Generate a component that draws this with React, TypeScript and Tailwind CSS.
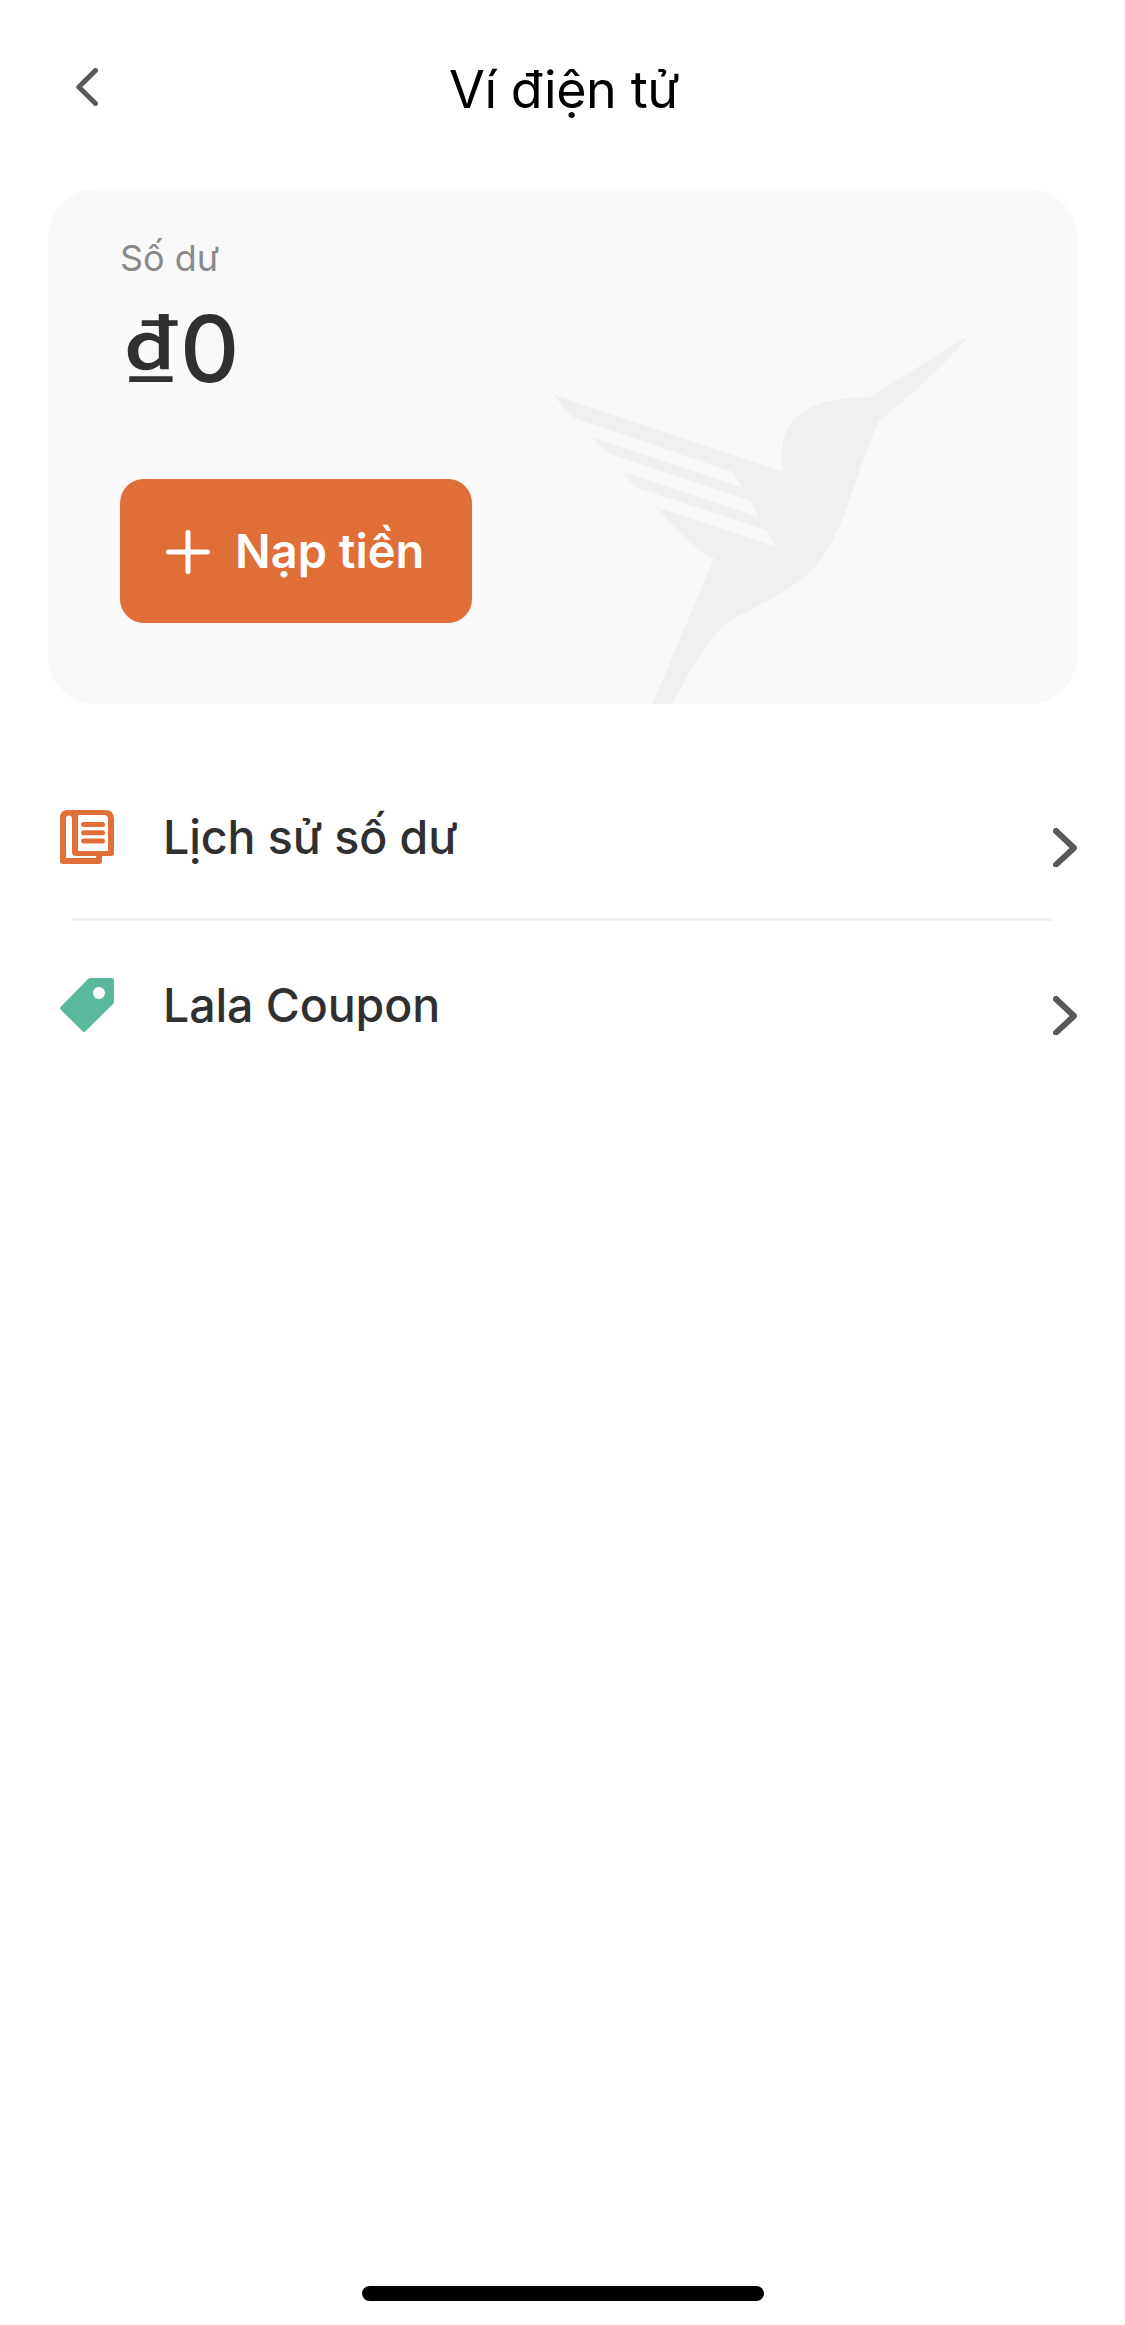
import type { ReactNode } from 'react'

function BackIcon() {
  return (
    <svg className="block h-[38px] w-[22px]" viewBox="0 0 22 38" fill="none">
      <path d="M19.5 2.5L2.8 19L19.5 35.5" stroke="#595959" strokeWidth="5" strokeLinecap="round" strokeLinejoin="round" />
    </svg>
  )
}

function ChevronIcon() {
  return (
    <svg className="block h-[39px] w-6" viewBox="0 0 24 39" fill="none">
      <path d="M3 3L21 20L3 36.6" stroke="#595959" strokeWidth="6" strokeLinecap="round" strokeLinejoin="round" />
    </svg>
  )
}

function PlusIcon() {
  return (
    <svg className="block h-11 w-11" viewBox="0 0 44 44" fill="none">
      <path d="M22 2.5V41.5M2.5 22H41.5" stroke="#fff" strokeWidth="5" strokeLinecap="round" />
    </svg>
  )
}

function HistoryIcon() {
  return (
    <svg className="block h-[54px] w-[54px]" viewBox="0 0 54 54" fill="#e06f38">
      <path
        fillRule="evenodd"
        d="M8 0H45Q54 0 54 9V43Q54 46 51 46H42V51Q42 54 39 54H3Q0 54 0 51V8Q0 0 8 0ZM6 8.5V48H36V46H16Q12 46 12 42V8.5Q12 5.5 9 5.5Q6 5.5 6 8.5ZM18 5V41H48V9Q48 5 44 5Z"
      />
      <rect x="21" y="12" width="24" height="5" rx="2.5" />
      <rect x="21" y="20.2" width="24" height="5" rx="2.5" />
      <rect x="21" y="28.4" width="24" height="5" rx="2.5" />
    </svg>
  )
}

function CouponIcon() {
  return (
    <svg className="block h-[54px] w-[54px]" viewBox="0 0 54 54" fill="#5ab99d">
      <path
        fillRule="evenodd"
        d="M30.5 0H52Q54 0 54 2V23.5Q54 25 53 26L25.5 53.3Q24 54.6 22.5 53.3L.8 31.8Q-.6 30.2 .8 28.8L28 1Q29 0 30.5 0ZM39 9A6 6 0 1 0 39 21A6 6 0 1 0 39 9Z"
      />
    </svg>
  )
}

function Hummingbird() {
  return (
    <svg className="absolute bottom-0 left-[492px] h-[384px] w-[440px]" viewBox="0 0 1320 1152" fill="#f0f0f0">
      <path d="M38 223L730 456C706 320 772 230 990 232L1272 54L1275 62C1190 157 1110 228 1016 304C960 430 925 570 883 650C820 790 700 830 583 895C500 950 450 1060 395 1152H336C400 1010 462 852 523 715C450 680 400 615 345 560L709 681L681 632L305 508C280 500 262 475 245 455L656 591L631 542L218 405C190 395 172 370 155 351L606 502L580 456L120 301C85 292 65 252 38 223Z" />
    </svg>
  )
}

function MenuRow({ icon, label }: { icon: ReactNode; label: ReactNode }) {
  return (
    <div className="flex h-[165px] items-center pl-3 pt-[3px]">
      {icon}
      <span className="ml-[49px] flex-1 text-[46.5px] font-medium leading-[56px] tracking-[-0.1px] text-[#303030]">{label}</span>
      <div className="pt-[21px]">
        <ChevronIcon />
      </div>
    </div>
  )
}

export default function App() {
  return (
    <div className="flex h-[2325px] w-[1125px] flex-col bg-white font-['Inter',sans-serif]">
      <header className="grid h-[189px] grid-cols-[1fr_auto_1fr] items-start">
        <div className="pl-[76px] pt-[68px]">
          <BackIcon />
        </div>
        <h1 className="pl-[3px] pt-[60px] text-[52px] leading-[60px] tracking-[-0.4px] text-black">Ví điện tử</h1>
        <div />
      </header>

      <section className="relative mx-12 flex h-[515px] flex-col items-start overflow-hidden rounded-[48px] bg-[#f9f9f9] px-[72px] pt-12">
        <Hummingbird />
        <p className="text-[36px] leading-[42px] text-[#8a8a8a]">Số dư</p>
        <p className="mt-[7px] flex h-[112px] items-baseline text-[92px] font-medium leading-[112px] text-[#303030]">
          <span className="w-[60px] origin-left scale-x-[1.14] font-['Noto_Sans_CJK_SC',sans-serif] text-[91px] leading-[112px]">₫</span>
          <span>0</span>
        </p>
        <button className="mt-[81px] flex h-36 w-[352px] items-center rounded-3xl bg-[#df6e37] pl-[46px] text-white">
          <div className="pt-[2px]">
            <PlusIcon />
          </div>
          <span className="ml-[25px] whitespace-nowrap text-[47px] font-semibold leading-[56px]">Nạp tiền</span>
        </button>
      </section>

      <nav className="mx-12 mt-[49px]">
        <MenuRow icon={<HistoryIcon />} label="Lịch sử số dư" />
        <div className="mx-6 h-[3px] bg-[#f1f1f1]" />
        <MenuRow icon={<CouponIcon />} label="Lala Coupon" />
      </nav>

      <div className="mb-6 ml-[362px] mt-auto h-[15px] w-[402px] rounded-full bg-black" />
    </div>
  )
}
